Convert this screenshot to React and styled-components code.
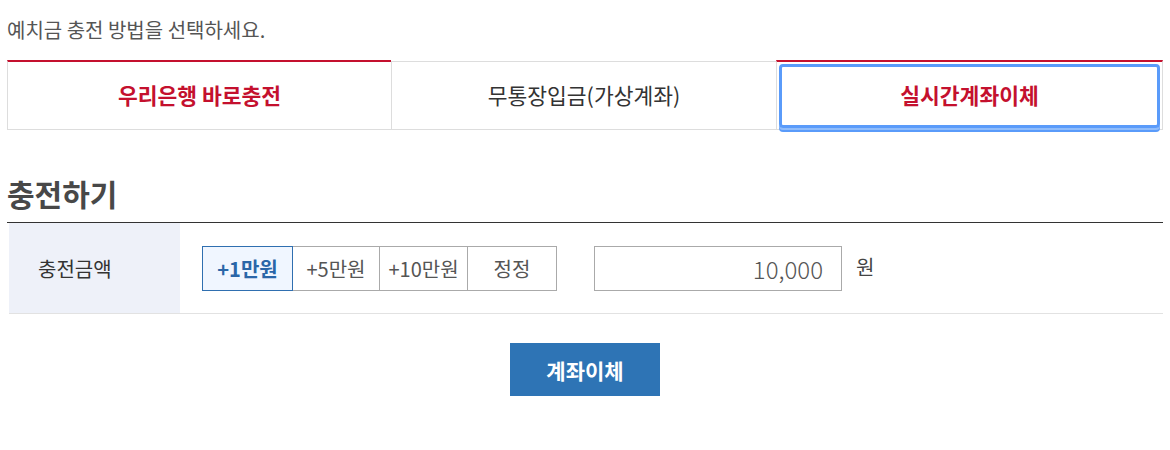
import React, { useState } from "react";
import styled, { createGlobalStyle, css } from "styled-components";

const GlobalStyle = createGlobalStyle`
  body {
    margin: 0;
    background: #fff;
    font-family: "Noto Sans CJK KR", "Noto Sans", sans-serif;
    color: #333;
  }
`;

const Page = styled.div`
  padding: 0 7px;
  width: 1156px;
`;

const Intro = styled.p`
  margin: 0;
  padding-top: 15px;
  font-size: 20px;
  line-height: 30px;
  color: #555;
`;

const Tabs = styled.div`
  display: grid;
  grid-template-columns: 384px 385px 387px;
  margin-top: 15px;
  height: 70px;
`;

const Tab = styled.button`
  position: relative;
  font-family: inherit;
  font-size: 21.5px;
  background: #fff;
  border: 1px solid #ddd;
  border-right: ${(p) => (p.$last ? "1px solid #ddd" : "none")};
  margin-top: 1px;
  color: #333;
  cursor: pointer;
  padding: 0 0 2px;
  ${(p) =>
    p.$active &&
    css`
      border-top: 2px solid #c4102e;
      margin-top: 0;
      color: #c4102e;
      font-weight: 700;
    `}
  ${(p) =>
    p.$focus &&
    css`
      &::after {
        content: "";
        position: absolute;
        left: 2px;
        right: 2px;
        top: 2px;
        bottom: 1px;
        border: 3px solid #5a9bfa;
        border-radius: 4px;
        box-shadow: 0 2px 0 #8fbcfb, 0 4px 0 #5a9bfa;
        pointer-events: none;
      }
    `}
`;

const Title = styled.h2`
  margin: 43px 0 0;
  font-size: 30px;
  line-height: 40px;
  font-weight: 700;
  color: #484848;
  padding-bottom: 9px;
  border-bottom: 1px solid #333;
`;

const Row = styled.div`
  display: grid;
  grid-template-columns: 171px 1fr;
  height: 90px;
  border-bottom: 1px solid #e2e2e2;
  margin-left: 2px;
`;

const Label = styled.div`
  background: #eef1f9;
  display: flex;
  align-items: center;
  padding-left: 29px;
  font-size: 20px;
  color: #333;
`;

const Field = styled.div`
  display: flex;
  align-items: center;
  padding-left: 23px;
`;

const Amounts = styled.div`
  display: flex;
`;

const AmountButton = styled.button`
  width: ${(p) => p.$w}px;
  height: 45px;
  padding: 0;
  font-family: inherit;
  font-size: 20px;
  color: #555;
  background: #fff;
  border: 1px solid #aaa;
  margin-left: -1px;
  cursor: pointer;
  position: relative;
  ${(p) =>
    p.$selected &&
    css`
      border-color: #2f6fb0;
      background: #f0f6ff;
      color: #2a66a8;
      font-weight: 700;
      z-index: 1;
    `}
`;

const AmountInput = styled.input`
  margin-left: 37px;
  width: 248px;
  height: 45px;
  box-sizing: border-box;
  border: 1px solid #aaa;
  text-align: right;
  padding: 0 18px 0 0;
  font-family: inherit;
  font-size: 24px;
  font-weight: 300;
  color: #555;
`;

const Unit = styled.span`
  margin-left: 14px;
  font-size: 20px;
  color: #444;
  padding-bottom: 4px;
`;

const Actions = styled.div`
  display: flex;
  justify-content: center;
  margin-top: 29px;
`;

const Submit = styled.button`
  width: 150px;
  height: 53px;
  border: none;
  background: #2e74b5;
  color: #fff;
  font-family: inherit;
  font-size: 21px;
  font-weight: 700;
  cursor: pointer;
  padding: 0;
`;

const tabs = [
  { label: "우리은행 바로충전", active: true },
  { label: "무통장입금(가상계좌)" },
  { label: "실시간계좌이체", active: true, focus: true },
];

const amounts = [
  { label: "+1만원", w: 91, selected: true },
  { label: "+5만원", w: 88 },
  { label: "+10만원", w: 89 },
  { label: "정정", w: 90 },
];

export default function App() {
  const [value] = useState("10,000");
  return (
    <Page>
      <GlobalStyle />
      <Intro>예치금 충전 방법을 선택하세요.</Intro>
      <Tabs>
        {tabs.map((t, i) => (
          <Tab
            key={t.label}
            $active={t.active}
            $focus={t.focus}
            $last={i === tabs.length - 1}
          >
            {t.label}
          </Tab>
        ))}
      </Tabs>
      <Title>충전하기</Title>
      <Row>
        <Label>충전금액</Label>
        <Field>
          <Amounts>
            {amounts.map((a) => (
              <AmountButton key={a.label} $w={a.w} $selected={a.selected}>
                {a.label}
              </AmountButton>
            ))}
          </Amounts>
          <AmountInput value={value} readOnly />
          <Unit>원</Unit>
        </Field>
      </Row>
      <Actions>
        <Submit>계좌이체</Submit>
      </Actions>
    </Page>
  );
}
